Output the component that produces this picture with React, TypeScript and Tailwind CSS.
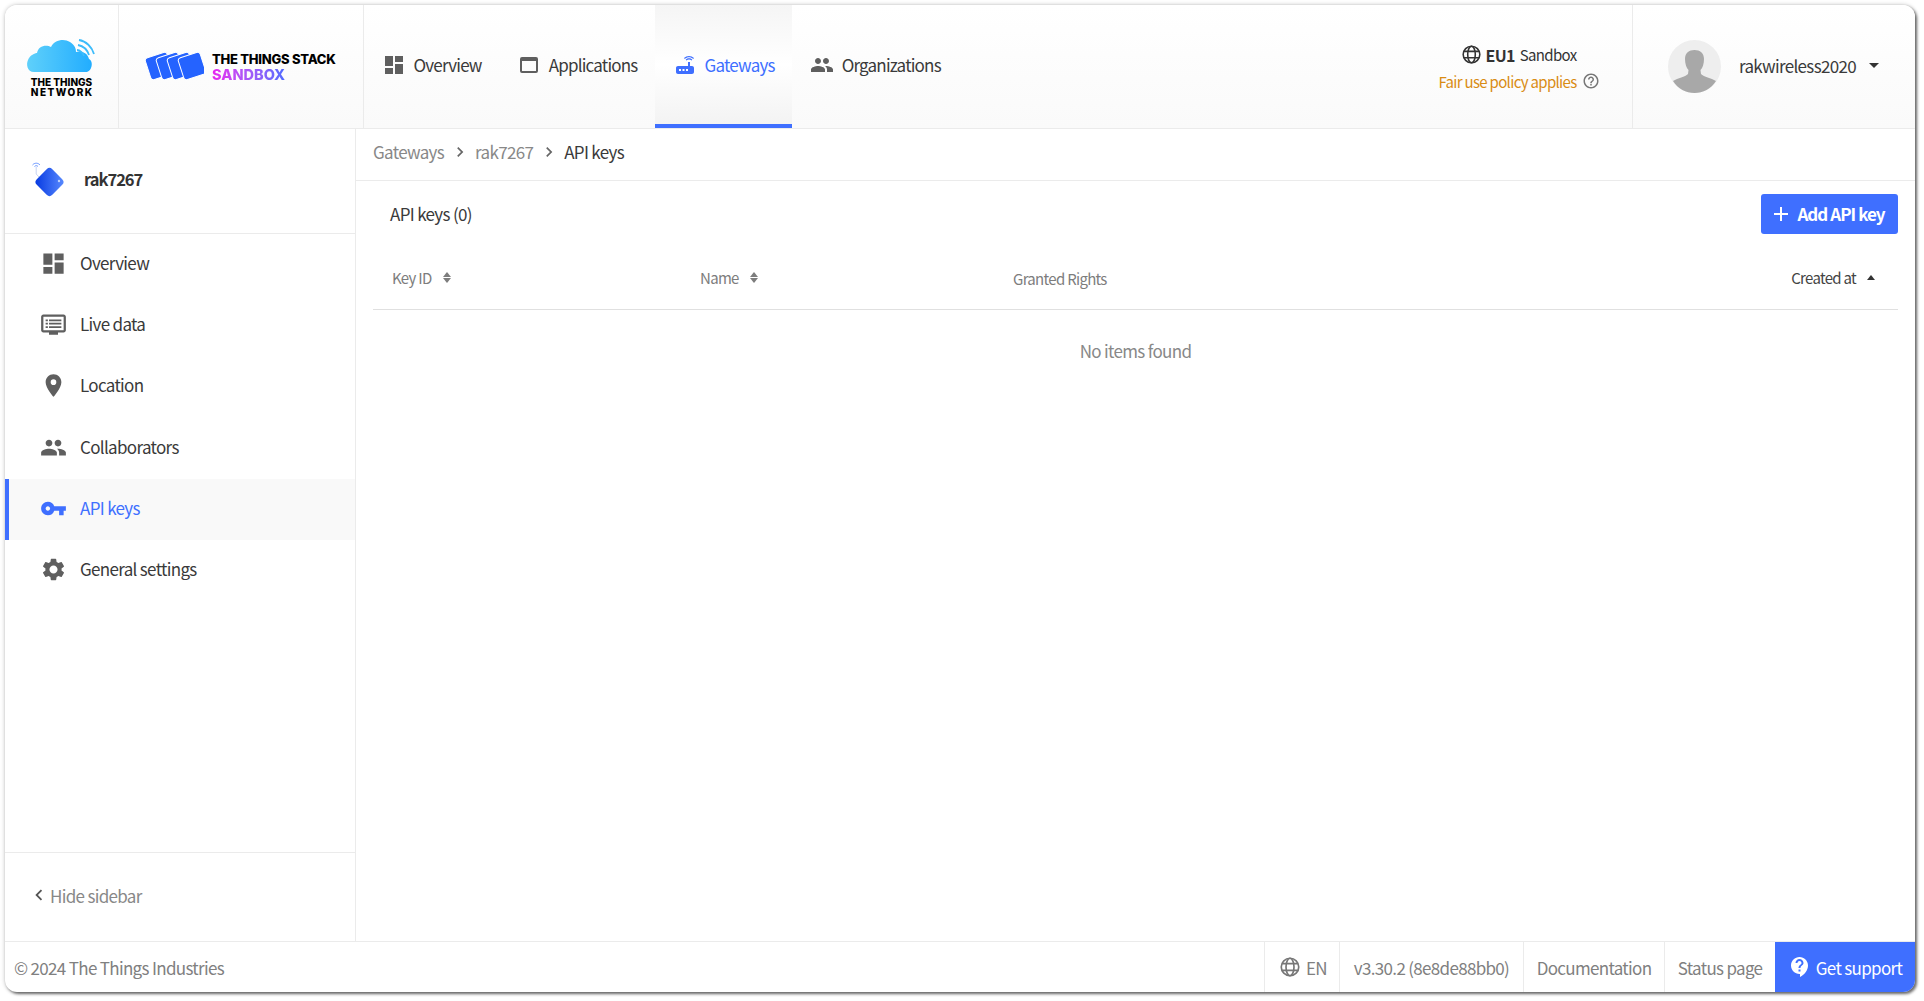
import { MdDashboard, MdGroup, MdVpnKey, MdSettings, MdLocationOn, MdRouter, MdContactSupport, MdHelpOutline, MdAdd, MdChevronRight, MdChevronLeft, MdArrowDropDown } from "react-icons/md";

const font = "font-['Noto_Sans_CJK_JP','Source_Sans_Pro','Noto_Sans',sans-serif]";

function Globe({ className }: { className?: string }) {
  return (
    <svg viewBox="0 0 24 24" className={className} fill="none" stroke="currentColor" strokeWidth="2">
      <circle cx="12" cy="12" r="10.5" />
      <ellipse cx="12" cy="12" rx="4.8" ry="10.5" />
      <path d="M2.5 8h19M2.5 16h19" />
    </svg>
  );
}

function AppWindow({ className }: { className?: string }) {
  return (
    <svg viewBox="0 0 24 24" className={className} fill="none" stroke="currentColor">
      <rect x="4" y="5" width="16" height="14" rx="1" strokeWidth="2" />
      <path d="M4 6.5h16" strokeWidth="3" />
    </svg>
  );
}

function LiveData({ className }: { className?: string }) {
  return (
    <svg viewBox="0 0 24 24" className={className} fill="currentColor">
      <path d="M21 3H3C1.9 3 1 3.9 1 5v12c0 1.1.9 2 2 2h5v2h8v-2h5c1.1 0 2-.9 2-2V5c0-1.1-.9-2-2-2zm0 14H3V5h18v12z" />
      <path d="M5 7.5h2v1.5H5zM8 7.5h11v1.5H8zM5 10.5h2V12H5zM8 10.5h11V12H8zM5 13.5h2V15H5zM8 13.5h11V15H8z" />
    </svg>
  );
}

function Cloud() {
  return (
    <svg viewBox="0 0 70 38" className="w-[70px] h-[38px]">
      <defs>
        <linearGradient id="cl" x1="0" y1="0" x2="1" y2="0">
          <stop offset="0" stopColor="#5fd0fa" />
          <stop offset="1" stopColor="#22adff" />
        </linearGradient>
      </defs>
      <path d="M8 35 C1 35 0 27 2 23 C4 18 9 16 11 16 C12 9 20 7 25 10 C28 3 38 1 44 5 C49 8 50 12 50 15 C55 13 62 16 63 22 C68 24 66 35 60 35 Z" fill="url(#cl)" />
      <path d="M53 3 C60 4 66 10 68 17" fill="none" stroke="#3dbcfb" strokeWidth="1.8" />
      <path d="M52 8 C57 9 61 12 63 18" fill="none" stroke="#3dbcfb" strokeWidth="1.8" />
      <path d="M51 13 C54 13 57 16 58 19" fill="none" stroke="#3dbcfb" strokeWidth="1.8" />
    </svg>
  );
}

function StackLogo() {
  const xs = [0, 11, 22, 33];
  return (
    <svg viewBox="0 0 60 30" className="w-[60px] h-[30px]">
      {xs.map((x) => (
        <rect key={x} x={x + 3.5} y="3.5" width="23" height="23" rx="3" fill="#2563ff" stroke="#fff" strokeWidth="1" transform={`rotate(-18 ${x + 15} 15)`} />
      ))}
    </svg>
  );
}

function Device() {
  return (
    <svg viewBox="0 0 34 36" className="w-[34px] h-[36px]">
      <defs>
        <linearGradient id="dv" x1="1" y1="0" x2="0" y2="1">
          <stop offset="0" stopColor="#5b8cff" />
          <stop offset="1" stopColor="#0437e0" />
        </linearGradient>
      </defs>
      <path d="M0.5 3 C2.5 0.6 6 0.6 8 3 M2.5 4.5 C3.5 3.4 5 3.4 6 4.5" fill="none" stroke="#5b8cff" strokeWidth="0.9" />
      <path d="M4.2 5V12L7 15" fill="none" stroke="#b9c8ee" strokeWidth="0.8" />
      <rect x="6.5" y="9" width="22" height="22" rx="4" fill="url(#dv)" transform="rotate(45 17.5 20)" />
      <circle cx="27" cy="19" r="1.2" fill="#bcd0ff" />
    </svg>
  );
}

function Avatar() {
  return (
    <svg viewBox="0 0 53 53" className="w-[53px] h-[53px] shrink-0">
      <circle cx="26.5" cy="26.5" r="26.5" fill="#eeeeee" />
      <path d="M26.5 10 C32 10 36 13 36 19 C36 24 34.5 28 32.5 30 L33 34 C36 37 43 38 48 41 C43 49 35 53 26.5 53 C18 53 10 49 5 41 C10 38 17 37 20 34 L20.5 30 C18.5 28 17 24 17 19 C17 13 21 10 26.5 10 Z" fill="#a8a8a8" />
    </svg>
  );
}

const tabs = [
  { label: "Overview", icon: <MdDashboard size={24} /> },
  { label: "Applications", icon: <AppWindow className="w-6 h-6" /> },
  { label: "Gateways", icon: <MdRouter size={24} />, active: true },
  { label: "Organizations", icon: <MdGroup size={24} /> },
];

const side = [
  { label: "Overview", icon: <MdDashboard size={27} /> },
  { label: "Live data", icon: <LiveData className="w-[27px] h-[27px]" /> },
  { label: "Location", icon: <MdLocationOn size={27} /> },
  { label: "Collaborators", icon: <MdGroup size={27} /> },
  { label: "API keys", icon: <MdVpnKey size={27} />, active: true },
  { label: "General settings", icon: <MdSettings size={27} /> },
];

function Sort() {
  return (
    <span className="flex flex-col ml-[11px] gap-[1px]">
      <span className="w-0 h-0 border-x-[4.5px] border-x-transparent border-b-[5px] border-b-[#7d7d7d]" />
      <span className="w-0 h-0 border-x-[4.5px] border-x-transparent border-t-[5px] border-t-[#7d7d7d]" />
    </span>
  );
}

export default function App() {
  return (
    <div className={`w-[1924px] h-[1001px] bg-white pt-[5px] pl-[5px] pr-[9px] pb-[9px] leading-none tracking-[-0.68px] overflow-hidden ${font}`}>
      <div className="w-full h-full flex flex-col rounded-[12px] overflow-hidden bg-white shadow-[2px_2px_3px_rgba(0,0,0,0.55),0_0_4px_rgba(0,0,0,0.25)]">
        {/* header */}
        <header className="h-[124px] shrink-0 flex border-b border-[#ebebeb] bg-gradient-to-b from-white to-[#fafafa]">
          <div className="w-[114px] shrink-0 border-r border-[#ebebeb] flex flex-col items-center pt-[32px]">
            <div className="-ml-[1px]"><Cloud /></div>
            <div className="font-['Inter',sans-serif] font-extrabold text-[10px] text-black tracking-[0px] mt-[2px] leading-[10px] text-center">
              THE THINGS
              <div className="tracking-[1.5px] mr-[-1.5px]">NETWORK</div>
            </div>
          </div>
          <div className="w-[245px] shrink-0 border-r border-[#ebebeb] flex items-center pl-[25px] gap-[8px] pb-[2px]">
            <StackLogo />
            <div className="font-['Inter',sans-serif] font-extrabold text-[13px] tracking-[-0.25px] leading-[16px] text-black mt-[3px]">
              <div>THE THINGS STACK</div>
              <div className="text-[14.5px] tracking-[0px] inline-block bg-gradient-to-r from-[#e81ff0] to-[#4f6bff] bg-clip-text text-transparent">SANDBOX</div>
            </div>
          </div>
          <nav className="flex flex-1">
            {tabs.map((t) => (
              <div
                key={t.label}
                className={`flex items-center gap-2 px-[17.5px] text-[17px] tracking-[-0.8px] border-b-4 ${t.active ? "text-[#4070ff] border-[#3f6fff] bg-gradient-to-b from-[#f5f5f5] via-white to-[#f3f3f3]" : "text-[#3a3a3a] border-transparent"}`}
              >
                <span className={t.active ? "text-[#3f6fff]" : "text-[#5f5f5f]"}>{t.icon}</span>
                <span>{t.label}</span>
              </div>
            ))}
          </nav>
          <div className="w-[223px] shrink-0 flex flex-col items-center justify-center pt-[2px] pr-[3px]">
            <div className="flex items-center text-[#333] text-[15px]">
              <Globe className="w-[19px] h-[19px] mr-[5px]" />
              <span className="font-semibold text-[16px]">EU1</span>
              <span className="ml-[5px]">Sandbox</span>
            </div>
            <div className="flex items-center text-[#d98c14] text-[15px] mt-[8px]">
              Fair use policy applies
              <MdHelpOutline size={18} className="text-[#777] ml-[5px]" />
            </div>
          </div>
          <div className="w-[283px] shrink-0 border-l border-[#ebebeb] flex items-center pl-[35px]">
            <Avatar />
            <span className="ml-[18px] pb-[3px] text-[17px] text-[#3a3a3a]">rakwireless2020</span>
            <MdArrowDropDown size={24} className="ml-[6px] mb-[4px] text-[#333]" />
          </div>
        </header>
        {/* body */}
        <div className="flex flex-1 min-h-0">
          <aside className="w-[351px] shrink-0 border-r border-[#ebebeb] flex flex-col">
            <div className="h-[105px] shrink-0 border-b border-[#ebebeb] flex items-center pl-[27px] gap-[18px] pb-[3px]">
              <Device />
              <span className="font-semibold text-[16.5px] tracking-[-1px] text-[#333]">rak7267</span>
            </div>
            <div className="flex-1">
              {side.map((s) => (
                <div
                  key={s.label}
                  className={`h-[61.2px] flex items-center gap-[13px] pl-[31px] pb-[2px] text-[17px] border-l-4 ${s.active ? "border-[#3f6fff] bg-[#f9f9f9] text-[#4070ff]" : "border-transparent text-[#3a3a3a]"}`}
                >
                  <span className={s.active ? "text-[#3f6fff]" : "text-[#5f5f5f]"}>{s.icon}</span>
                  <span className="pb-[2px]">{s.label}</span>
                </div>
              ))}
            </div>
            <div className="h-[89px] shrink-0 border-t border-[#ebebeb] flex items-center pl-[23px] pb-[4px] text-[#888] text-[17px]">
              <MdChevronLeft size={22} className="text-[#555]" />
              <span>Hide sidebar</span>
            </div>
          </aside>
          <main className="flex-1 min-w-0 flex flex-col">
            <div className="h-[52px] shrink-0 border-b border-[#ebebeb] flex items-center pl-[17px] pb-[6px] text-[17px] text-[#888]">
              <span>Gateways</span>
              <MdChevronRight size={20} className="mx-[5.5px] text-[#666]" />
              <span>rak7267</span>
              <MdChevronRight size={20} className="mx-[5.5px] text-[#666]" />
              <span className="text-[#3a3a3a]">API keys</span>
            </div>
            <div className="pl-[17px] pr-[17px] flex-1">
              <div className="flex items-center justify-between pt-[13px]">
                <span className="ml-[17px] pb-[2px] text-[17px] text-[#3a3a3a]">API keys (0)</span>
                <button className="h-[40px] w-[137px] rounded-[3px] bg-[#3f6fff] text-white text-[17px] font-semibold tracking-[-0.95px] flex items-center justify-center pr-[5px]">
                  <MdAdd size={24} className="mr-[4px]" />
                  <span className="pb-[1px]">Add API key</span>
                </button>
              </div>
              <div className="grid grid-cols-[308px_313px_1fr_auto] items-center h-[76px] pt-[12px] border-b border-[#e0e0e0] text-[15px] tracking-[-0.7px] text-[#7d7d7d] pl-[19px] pr-[23px]">
                <div className="flex items-center">Key ID<Sort /></div>
                <div className="flex items-center">Name<Sort /></div>
                <div className="pt-[1px]">Granted Rights</div>
                <div className="flex items-center text-[#444]">Created at
                  <span className="ml-[11px] w-0 h-0 border-x-[4.5px] border-x-transparent border-b-[5px] border-b-[#333]" />
                </div>
              </div>
              <div className="text-center text-[17px] text-[#888] pt-[32px]">No items found</div>
            </div>
          </main>
        </div>
        {/* footer */}
        <footer className="h-[51px] shrink-0 border-t border-[#ebebeb] flex items-center text-[17px] text-[#808080]">
          <span className="ml-[9px] flex-1">© 2024 The Things Industries</span>
          <div className="h-full border-l border-[#ebebeb] flex items-center w-[75px] pl-[15px]">
            <Globe className="w-[20px] h-[20px] mr-[6px] text-[#777]" />EN
          </div>
          <div className="h-full border-l border-[#ebebeb] flex items-center justify-center w-[184px]">v3.30.2 (8e8de88bb0)</div>
          <div className="h-full border-l border-[#ebebeb] flex items-center justify-center w-[141px]">Documentation</div>
          <div className="h-full border-l border-[#ebebeb] flex items-center justify-center w-[111px]">Status page</div>
          <div className="h-full w-[140px] bg-[#3f6fff] text-white flex items-center justify-center gap-[4px]">
            <MdContactSupport size={24} />Get support
          </div>
        </footer>
      </div>
    </div>
  );
}
